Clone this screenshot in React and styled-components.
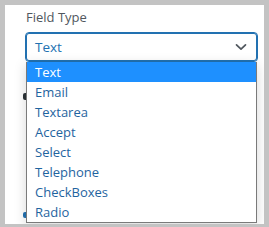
import React, { useState } from "react";
import styled, { createGlobalStyle } from "styled-components";

const GlobalStyle = createGlobalStyle`
  html, body {
    margin: 0;
    padding: 0;
    background: #c3c3c3;
  }
  * {
    box-sizing: border-box;
  }
`;

const Frame = styled.div`
  width: 269px;
  height: 227px;
  padding: 5px 5px 3px 5px;
  overflow: hidden;
`;

const Panel = styled.div`
  position: relative;
  height: 100%;
  background: #fff;
  padding: 3px 0 0 20px;
  font-family: "Open Sans", "Noto Sans", sans-serif;
  overflow: hidden;
`;

const Label = styled.div`
  font-size: 13px;
  line-height: 18px;
  color: #50575e;
  margin-left: 1px;
`;

const SelectBox = styled.div`
  margin-top: 6px;
  width: 233px;
  height: 30px;
  border: 1px solid #2271b1;
  box-shadow: 0 0 0 1px #2271b1 inset;
  border-radius: 4px;
  display: flex;
  align-items: center;
  justify-content: space-between;
  padding: 0 10px 0 9px;
  font-size: 13.5px;
  color: #2271b1;
  background: #fff;
`;

const Behind = styled.div`
  display: flex;
  flex-direction: column;
  align-items: flex-start;
  gap: 112px;
  margin-top: 31px;
  margin-left: -2px;
`;

const BehindMark = styled.span`
  width: 6px;
  height: ${(p) => p.h}px;
  border-radius: 2px;
  background: ${(p) => p.color};
`;

const List = styled.ul`
  position: absolute;
  top: 57px;
  left: 21px;
  width: 231px;
  margin: 0;
  padding: 0;
  list-style: none;
  background: #fff;
  border: 1px solid #7a7a7a;
  border-top: none;
  box-shadow: 0 3px 12px rgba(0, 0, 0, 0.16);
`;

const Option = styled.li`
  height: 20px;
  line-height: 20px;
  padding-left: 8px;
  font-size: 13px;
  color: ${(p) => (p.active ? "#fff" : "#1f64a0")};
  background: ${(p) => (p.active ? "#1e90ff" : "transparent")};
  cursor: default;
`;

const Chevron = () => (
  <svg width="12" height="8" viewBox="0 0 12 8" fill="none">
    <path
      d="M1.5 1.8 L6 6.2 L10.5 1.8"
      stroke="#50575e"
      strokeWidth="1.7"
      strokeLinecap="round"
      strokeLinejoin="round"
    />
  </svg>
);

const types = [
  "Text",
  "Email",
  "Textarea",
  "Accept",
  "Select",
  "Telephone",
  "CheckBoxes",
  "Radio",
];

export default function App() {
  const [value, setValue] = useState("Text");

  return (
    <>
      <GlobalStyle />
      <Frame>
        <Panel>
          <Label>Field Type</Label>
          <SelectBox>
            <span>{value}</span>
            <Chevron />
          </SelectBox>
          <Behind>
            <BehindMark h={7} color="#2c3338" />
            <BehindMark h={6} color="#2271b1" />
          </Behind>
          <List>
            {types.map((t) => (
              <Option key={t} active={t === value} onClick={() => setValue(t)}>
                {t}
              </Option>
            ))}
          </List>
        </Panel>
      </Frame>
    </>
  );
}
